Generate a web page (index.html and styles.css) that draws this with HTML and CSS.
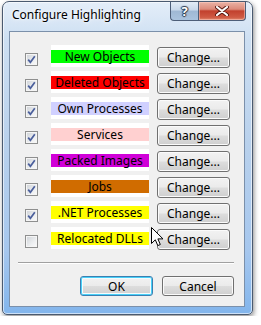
FILE: index.html
```html
<!DOCTYPE html>
<html>
<head>
    <title>Configure Highlighting</title>
    <link rel="stylesheet" href="styles.css">
</head>
<body>
    <div class="window">
        <div class="titlebar">
            <span class="title">Configure Highlighting</span>
            <div class="caption-btns">
                <div class="cap help">?</div>
                <div class="cap close">
                    <svg width="14" height="10" viewBox="0 0 14 10">
                        <path d="M2 1 L12 9 M12 1 L2 9" stroke="#5a1a12" stroke-width="4" stroke-linecap="round"/>
                        <path d="M2 1 L12 9 M12 1 L2 9" stroke="#fff" stroke-width="2.2" stroke-linecap="round"/>
                    </svg>
                </div>
            </div>
        </div>

        <div class="client">
            <div class="rows">
                <div class="row">
                    <span class="check on"><svg width="11" height="11" viewBox="0 0 11 11"><path d="M2.2 5.6 L4.4 8.3 L8.8 2.2" fill="none" stroke="#4b5f9c" stroke-width="1.7"/></svg></span>
                    <span class="swatch"><span class="band c-new">New Objects</span></span>
                    <button class="btn">Change...</button>
                </div>
                <div class="row">
                    <span class="check on"><svg width="11" height="11" viewBox="0 0 11 11"><path d="M2.2 5.6 L4.4 8.3 L8.8 2.2" fill="none" stroke="#4b5f9c" stroke-width="1.7"/></svg></span>
                    <span class="swatch"><span class="band c-deleted">Deleted Objects</span></span>
                    <button class="btn">Change...</button>
                </div>
                <div class="row">
                    <span class="check on"><svg width="11" height="11" viewBox="0 0 11 11"><path d="M2.2 5.6 L4.4 8.3 L8.8 2.2" fill="none" stroke="#4b5f9c" stroke-width="1.7"/></svg></span>
                    <span class="swatch"><span class="band c-own">Own Processes</span></span>
                    <button class="btn">Change...</button>
                </div>
                <div class="row">
                    <span class="check on"><svg width="11" height="11" viewBox="0 0 11 11"><path d="M2.2 5.6 L4.4 8.3 L8.8 2.2" fill="none" stroke="#4b5f9c" stroke-width="1.7"/></svg></span>
                    <span class="swatch"><span class="band c-services">Services</span></span>
                    <button class="btn">Change...</button>
                </div>
                <div class="row">
                    <span class="check on"><svg width="11" height="11" viewBox="0 0 11 11"><path d="M2.2 5.6 L4.4 8.3 L8.8 2.2" fill="none" stroke="#4b5f9c" stroke-width="1.7"/></svg></span>
                    <span class="swatch"><span class="band c-packed">Packed Images</span></span>
                    <button class="btn">Change...</button>
                </div>
                <div class="row">
                    <span class="check on"><svg width="11" height="11" viewBox="0 0 11 11"><path d="M2.2 5.6 L4.4 8.3 L8.8 2.2" fill="none" stroke="#4b5f9c" stroke-width="1.7"/></svg></span>
                    <span class="swatch"><span class="band c-jobs">Jobs</span></span>
                    <button class="btn">Change...</button>
                </div>
                <div class="row">
                    <span class="check on"><svg width="11" height="11" viewBox="0 0 11 11"><path d="M2.2 5.6 L4.4 8.3 L8.8 2.2" fill="none" stroke="#4b5f9c" stroke-width="1.7"/></svg></span>
                    <span class="swatch"><span class="band c-net">.NET Processes</span></span>
                    <button class="btn">Change...</button>
                </div>
                <div class="row">
                    <span class="check"></span>
                    <span class="swatch"><span class="band c-reloc">Relocated DLLs</span></span>
                    <button class="btn">Change...</button>
                </div>
            </div>

            <div class="sep"></div>

            <div class="actions">
                <button class="btn wide default">OK</button>
                <button class="btn wide">Cancel</button>
            </div>
        </div>

        <!-- mouse pointer -->
        <svg class="cursor" width="13" height="20" viewBox="0 0 13 20">
            <path d="M0.5 0.5 L0.5 16.5 L4.3 12.8 L6.8 18.6 L9.3 17.5 L6.9 11.9 L12 11.9 Z" fill="#fff" stroke="#000" stroke-width="1"/>
        </svg>
    </div>
</body>
</html>
```

FILE: styles.css
```css
body {
    margin: 0;
    padding: 1px 2px;
    background: #fff;
    font-family: "Noto Sans", "Open Sans", sans-serif;
    font-size: 12px;
}
.window {
    position: relative;
    box-sizing: border-box;
    width: 251px;
    height: 314px;
    display: flex;
    flex-direction: column;
    padding: 0 7px 7px 6px;
    border: 1px solid #4a5a70;
    border-radius: 7px 7px 5px 5px;
    background: linear-gradient(to bottom, #e4eef9 0%, #cddff2 12%, #b9d1ec 45%, #a6c7ee 80%, #82b5ec 100%);
    box-shadow: 1px 2px 5px rgba(0, 0, 0, 0.45), inset 0 0 0 1px rgba(255, 255, 255, 0.6);
}
.titlebar {
    height: 29px;
    display: flex;
    align-items: flex-start;
}
.title {
    margin: 5px 0 0 3px;
    font-size: 12px;
    line-height: 16px;
    color: #000;
    text-shadow: 0 0 6px rgba(255, 255, 255, 0.9), 0 0 3px #fff;
}
.caption-btns {
    margin-left: auto;
    margin-right: -1px;
    display: flex;
}
.cap {
    box-sizing: border-box;
    height: 19px;
    display: flex;
    align-items: center;
    justify-content: center;
    border: 1px solid #4d5e78;
    border-top: none;
}
.help {
    width: 28px;
    border-radius: 0 0 0 4px;
    border-right: none;
    background: linear-gradient(to bottom, #e3ecf6 0%, #c8d8ea 45%, #9fb8d4 50%, #aac3de 100%);
    color: #fff;
    font-weight: bold;
    font-size: 13px;
    text-shadow: 0 0 1px #2b3a50, 1px 0 1px #2b3a50, -1px 0 1px #2b3a50, 0 1px 1px #2b3a50, 0 -1px 1px #2b3a50;
}
.close {
    width: 48px;
    border-radius: 0 0 4px 0;
    background: linear-gradient(to bottom, #eab2a5 0%, #dc8a7a 40%, #c2412d 50%, #cf5a43 85%, #e08a70 100%);
    box-shadow: inset 0 0 0 1px rgba(255, 210, 200, 0.5);
}
.client {
    flex: 1;
    box-sizing: border-box;
    border: 1px solid #7b90aa;
    background: #f0f0f0;
}
.rows {
    padding-top: 13px;
}
.row {
    height: 26px;
    display: flex;
    align-items: flex-start;
    padding-left: 15px;
}
.check {
    box-sizing: border-box;
    width: 13px;
    height: 13px;
    margin-top: 8px;
    margin-right: 13px;
    border: 1px solid #8e8f8f;
    background: linear-gradient(135deg, #cdd1d6 0%, #eceef0 60%, #fbfbfb 100%);
    box-shadow: inset 0 0 0 1px #f5f5f5;
    display: flex;
}
.check svg {
    display: block;
}
.swatch {
    width: 98px;
    height: 22px;
    padding-top: 5px;
    box-sizing: border-box;
    background: #fff;
    margin-right: 8px;
}
.band {
    display: block;
    height: 13px;
    line-height: 13px;
    text-align: center;
    color: #000;
    white-space: nowrap;
}
.c-new { background: #00ff00; }
.c-deleted { background: #ff0000; }
.c-own { background: #d0d0ff; }
.c-services { background: #ffd0d0; }
.c-packed { background: #d000d8; }
.c-jobs { background: #d06c00; }
.c-net { background: #ffff00; }
.c-reloc { background: #ffff00; }
.btn {
    box-sizing: border-box;
    width: 73px;
    height: 21px;
    margin-top: 2px;
    padding: 0;
    font-family: "Noto Sans", "Open Sans", sans-serif;
    font-size: 12px;
    color: #000;
    border: 1px solid #707070;
    border-radius: 3px;
    background: linear-gradient(to bottom, #f2f2f2 0%, #ebebeb 48%, #dddddd 52%, #cfcfcf 100%);
    box-shadow: inset 0 0 0 1px #fbfbfb;
}
.sep {
    margin: 9px 10px 0 8px;
    border-top: 1px solid #a0a0a0;
    border-bottom: 1px solid #fff;
}
.actions {
    display: flex;
    justify-content: flex-end;
    gap: 9px;
    padding-right: 10px;
    margin-top: 12px;
}
.btn.wide {
    height: 20px;
    margin-top: 0;
}
.btn.wide:last-child {
    width: 72px;
}
.btn.default {
    border-color: #3c7fb1;
    box-shadow: inset 0 0 0 1px #48d0f8, inset 0 0 0 2px #f4fbfe;
}
.cursor {
    position: absolute;
    left: 148px;
    top: 225px;
}
```
